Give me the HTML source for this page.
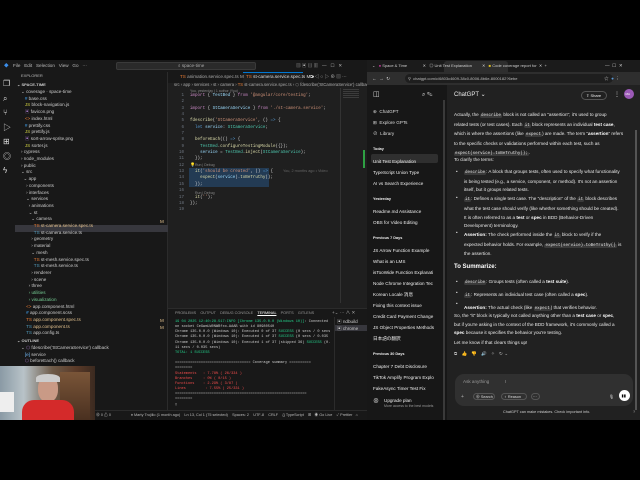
<!DOCTYPE html>
<html><head><meta charset="utf-8">
<style>
*{margin:0;padding:0;box-sizing:border-box}
body{width:640px;height:480px;background:#000;position:relative;overflow:hidden;font-family:"Liberation Sans","Noto Sans CJK JP",sans-serif;font-size:4.6px;color:#ccc}
.a{position:absolute;white-space:nowrap;line-height:6px}
.m{font-family:"Liberation Mono",monospace}
.bx{position:absolute}
.cm{background:#3a3a3a;border-radius:1.5px;padding:0 1px;font-family:"Liberation Mono",monospace;font-size:4.2px;color:#ddd}
b{color:#fff}
</style></head><body>
<!-- VS Code -->
<div class="bx" style="left:0;top:60px;width:367px;height:360px;background:#1f1f1f"></div>
<div class="bx" style="left:0;top:60px;width:367px;height:12px;background:#181818"></div>
<div class="bx" style="left:116px;top:62px;width:140px;height:8px;background:#2a2a2a;border:1px solid #3a3a3a;border-radius:2px"></div>
<div class="a" style="left:178px;top:63px;color:#aaa">⌕ space-time</div>
<div class="a" style="left:4px;top:63px;color:#3b8eea">◆</div>
<div class="a" style="left:13px;top:63px;color:#bbb">File &nbsp; Edit &nbsp; Selection &nbsp; View &nbsp; Go &nbsp; ···</div>
<div class="a" style="left:296px;top:63px;color:#bbb">▥ ▣ ▤ ▥ &nbsp; — &nbsp; ☐ &nbsp; ✕</div>
<div class="bx" style="left:0;top:72px;width:15px;height:338px;background:#181818"></div>
<div class="a" style="left:3px;top:77px;font-size:8px;color:#ddd;line-height:14.5px">❐<br>⌕<br>⑂<br>▷<br>⊞<br>◎<br>ϟ</div>
<div class="bx" style="left:15px;top:72px;width:153px;height:338px;background:#181818;border-right:1px solid #2b2b2b"></div>
<div class="a" style="left:21px;top:73px;color:#bbb;font-size:4px">EXPLORER</div>
<div class="a" style="left:17px;top:81.5px;color:#ccc;font-size:4px;font-weight:bold">⌄ SPACE-TIME</div>
<div class="bx" style="left:15px;top:225px;width:153px;height:6.5px;background:#37373d"></div>
<div class="a" style="left:21px;top:89px;line-height:6.7px;color:#ccc">
⌄ coverage · space-time<br>
&nbsp;&nbsp;&nbsp;<span style="color:#42a5f5">#</span> base.css<br>
&nbsp;&nbsp;&nbsp;<span style="color:#cbcb41">JS</span> block-navigation.js<br>
&nbsp;&nbsp;&nbsp;<span style="color:#a074c4">▣</span> favicon.png<br>
&nbsp;&nbsp;&nbsp;<span style="color:#e37933">&lt;&gt;</span> index.html<br>
&nbsp;&nbsp;&nbsp;<span style="color:#42a5f5">#</span> prettify.css<br>
&nbsp;&nbsp;&nbsp;<span style="color:#cbcb41">JS</span> prettify.js<br>
&nbsp;&nbsp;&nbsp;<span style="color:#a074c4">▣</span> sort-arrow-sprite.png<br>
&nbsp;&nbsp;&nbsp;<span style="color:#cbcb41">JS</span> sorter.js<br>
› cypress<br>› node_modules<br>› public<br>⌄ src<br>
&nbsp;&nbsp;⌄ app<br>&nbsp;&nbsp;&nbsp;&nbsp;› components<br>&nbsp;&nbsp;&nbsp;&nbsp;› interfaces<br>&nbsp;&nbsp;&nbsp;&nbsp;⌄ services<br>&nbsp;&nbsp;&nbsp;&nbsp;&nbsp;&nbsp;› animations<br>&nbsp;&nbsp;&nbsp;&nbsp;&nbsp;&nbsp;⌄ st<br>&nbsp;&nbsp;&nbsp;&nbsp;&nbsp;&nbsp;&nbsp;&nbsp;⌄ camera<br>
&nbsp;&nbsp;&nbsp;&nbsp;&nbsp;&nbsp;&nbsp;&nbsp;&nbsp;&nbsp;<span style="color:#e37933">TS</span> <span style="color:#e2c08d">st-camera.service.spec.ts</span><br>
&nbsp;&nbsp;&nbsp;&nbsp;&nbsp;&nbsp;&nbsp;&nbsp;&nbsp;&nbsp;<span style="color:#519aba">TS</span> st-camera.service.ts<br>
&nbsp;&nbsp;&nbsp;&nbsp;&nbsp;&nbsp;&nbsp;&nbsp;› geometry<br>&nbsp;&nbsp;&nbsp;&nbsp;&nbsp;&nbsp;&nbsp;&nbsp;› material<br>&nbsp;&nbsp;&nbsp;&nbsp;&nbsp;&nbsp;&nbsp;&nbsp;⌄ mesh<br>
&nbsp;&nbsp;&nbsp;&nbsp;&nbsp;&nbsp;&nbsp;&nbsp;&nbsp;&nbsp;<span style="color:#e37933">TS</span> st-mesh.service.spec.ts<br>
&nbsp;&nbsp;&nbsp;&nbsp;&nbsp;&nbsp;&nbsp;&nbsp;&nbsp;&nbsp;<span style="color:#519aba">TS</span> st-mesh.service.ts<br>
&nbsp;&nbsp;&nbsp;&nbsp;&nbsp;&nbsp;&nbsp;&nbsp;› renderer<br>&nbsp;&nbsp;&nbsp;&nbsp;&nbsp;&nbsp;&nbsp;&nbsp;› scene<br>&nbsp;&nbsp;&nbsp;&nbsp;&nbsp;&nbsp;› three<br>
&nbsp;&nbsp;&nbsp;&nbsp;&nbsp;&nbsp;<span style="color:#73c991">› utilities</span><br>&nbsp;&nbsp;&nbsp;&nbsp;&nbsp;&nbsp;<span style="color:#73c991">› visualization</span><br>
&nbsp;&nbsp;&nbsp;&nbsp;<span style="color:#e37933">&lt;&gt;</span> app.component.html<br>
&nbsp;&nbsp;&nbsp;&nbsp;<span style="color:#42a5f5">#</span> app.component.scss<br>
&nbsp;&nbsp;&nbsp;&nbsp;<span style="color:#e37933">TS</span> <span style="color:#e2c08d">app.component.spec.ts</span><br>
&nbsp;&nbsp;&nbsp;&nbsp;<span style="color:#519aba">TS</span> <span style="color:#e2c08d">app.component.ts</span><br>
&nbsp;&nbsp;&nbsp;&nbsp;<span style="color:#519aba">TS</span> app.config.ts
</div>
<div class="a" style="left:17px;top:338px;font-size:4px;font-weight:bold">⌄ OUTLINE</div>
<div class="a" style="left:21px;top:345px;line-height:6.7px">⌄ <span style="color:#b180d7">⬡</span> fdescribe('StCameraService') callback<br>&nbsp;&nbsp;&nbsp;<span style="color:#75beff">[e]</span> service<br>&nbsp;&nbsp;&nbsp;<span style="color:#b180d7">⬡</span> beforeEach() callback</div>
<div class="a" style="left:160px;top:219px;color:#e2c08d;line-height:6.7px">M<br>&nbsp;</div>
<div class="a" style="left:160px;top:318px;color:#e2c08d;line-height:6.7px">M<br>M</div>
<!-- tabs -->
<div class="bx" style="left:168px;top:72px;width:199px;height:11px;background:#181818"></div>
<div class="bx" style="left:243px;top:72px;width:60px;height:11px;background:#1f1f1f;border-top:1px solid #0078d4"></div>
<div class="a" style="left:180px;top:74px;color:#aaa"><span style="color:#e37933">TS</span> animation.service.spec.ts M</div>
<div class="a" style="left:246px;top:74px;color:#ddd"><span style="color:#e37933">TS</span> st-camera.service.spec.ts M ●</div>
<div class="a" style="left:310px;top:74px;color:#bbb">⧉ ◁ ○ ▷ ⊕ ▥ ···</div>
<div class="a" style="left:174px;top:82px;color:#aaa;font-size:4.2px">src › app › services › st › camera › <span style="color:#e37933">TS</span> st-camera.service.spec.ts › ⬡ fdescribe('StCameraService') callback</div>
<div class="a" style="left:190px;top:88px;color:#888;font-size:3.5px">You, yesterday | 1 author (You)</div>
<div class="bx" style="left:189px;top:168px;width:80px;height:19px;background:#264f78;opacity:.6"></div>
<div class="a m" style="left:176px;top:93px;line-height:6.35px;color:#6e7681;font-size:4.2px;text-align:right;width:8px">1<br>2<br>3<br>4<br>5<br>6<br>7<br>8<br>9<br>10<br>11<br>12<br>13<br>14<br>15<br>16<br>17<br>18<br>19</div>
<div class="a m" style="left:190px;top:93px;line-height:6.35px;font-size:4.2px;color:#d4d4d4">
<span style="color:#c586c0">import</span> { <span style="color:#9cdcfe">TestBed</span> } <span style="color:#c586c0">from</span> <span style="color:#ce9178">'@angular/core/testing'</span>;<br><br>
<span style="color:#c586c0">import</span> { <span style="color:#9cdcfe">StCameraService</span> } <span style="color:#c586c0">from</span> <span style="color:#ce9178">'./st-camera.service'</span>;<br><br>
<span style="color:#dcdcaa">fdescribe</span>(<span style="color:#ce9178">'StCameraService'</span>, () <span style="color:#569cd6">=&gt;</span> {<br>
&nbsp;&nbsp;<span style="color:#569cd6">let</span> <span style="color:#9cdcfe">service</span>: <span style="color:#4ec9b0">StCameraService</span>;<br><br>
&nbsp;&nbsp;<span style="color:#dcdcaa">beforeEach</span>(() <span style="color:#569cd6">=&gt;</span> {<br>
&nbsp;&nbsp;&nbsp;&nbsp;<span style="color:#4ec9b0">TestBed</span>.<span style="color:#dcdcaa">configureTestingModule</span>({});<br>
&nbsp;&nbsp;&nbsp;&nbsp;<span style="color:#9cdcfe">service</span> = <span style="color:#4ec9b0">TestBed</span>.<span style="color:#dcdcaa">inject</span>(<span style="color:#4ec9b0">StCameraService</span>);<br>
&nbsp;&nbsp;});<br><span style="color:#ffcc00">💡</span><br>
&nbsp;&nbsp;<span style="color:#dcdcaa">it</span>(<span style="color:#ce9178">'should be created'</span>, () <span style="color:#569cd6">=&gt;</span> {<br>
&nbsp;&nbsp;&nbsp;&nbsp;<span style="color:#dcdcaa">expect</span>(<span style="color:#9cdcfe">service</span>).<span style="color:#dcdcaa">toBeTruthy</span>();<br>
&nbsp;&nbsp;});<br><br>
&nbsp;&nbsp;<span style="color:#dcdcaa">it</span>(<span style="color:#ce9178">''</span>);<br>});<br></div>
<div class="a" style="left:195px;top:162px;color:#888;font-size:3.5px">Run | Debug</div>
<div class="a" style="left:195px;top:190px;color:#888;font-size:3.5px">Run | Debug</div>
<div class="a" style="left:283px;top:168px;color:#666;font-size:3.8px">You, 2 months ago • Video</div>
<div class="bx" style="left:340px;top:88px;width:1px;height:215px;background:#333"></div>
<div class="bx" style="left:343px;top:89px;width:16px;height:10px;opacity:.4;background:repeating-linear-gradient(#666 0 1px,transparent 1px 2px)"></div>
<div class="bx" style="left:363px;top:150px;width:1.5px;height:18px;background:#2ea043"></div>
<!-- panel -->
<div class="bx" style="left:168px;top:308px;width:199px;height:102px;background:#181818;border-top:1px solid #2b2b2b"></div>
<div class="a" style="left:175px;top:310px;color:#999;font-size:3.8px">PROBLEMS &nbsp;&nbsp; OUTPUT &nbsp;&nbsp; DEBUG CONSOLE &nbsp;&nbsp; <span style="color:#fff;text-decoration:underline">TERMINAL</span> &nbsp;&nbsp; PORTS &nbsp;&nbsp; GITLENS</div>
<div class="a" style="left:332px;top:310px;color:#aaa">+⌄ ··· ∧ ✕</div>
<div class="bx" style="left:334px;top:317px;width:33px;height:93px;border-left:1px solid #2b2b2b"></div>
<div class="bx" style="left:335px;top:325px;width:32px;height:6px;background:#37373d"></div>
<div class="a" style="left:337px;top:318px;line-height:7px">▣ ndbuild<br>▣ chrome</div>
<div class="a m" style="left:175px;top:320px;font-size:3.6px;line-height:5.15px;color:#ccc">
<span style="color:#23d18b">19 04 2025 12:40:28.517:INFO [Chrome 135.0.0.0 (Windows 10)]</span>: Connected<br>
on socket CeGwmLW0NWBfxo-AAAB with id 80980540<br>
Chrome 135.0.0.0 (Windows 10): Executed 0 of 37 <span style="color:#23d18b">SUCCESS</span> (0 secs / 0 secs<br>
Chrome 135.0.0.0 (Windows 10): Executed 1 of 37 <span style="color:#23d18b">SUCCESS</span> (0 secs / 0.035<br>
Chrome 135.0.0.0 (Windows 10): Executed 1 of 37 (skipped 36) <span style="color:#23d18b">SUCCESS</span> (0.<br>
11 secs / 0.035 secs)<br>
<span style="color:#23d18b">TOTAL: 1 SUCCESS</span><br><br>
=================================== Coverage summary ==========<br>
========<br>
<span style="color:#f14c4c">Statements &nbsp;&nbsp;: 7.78% ( 26/334 )</span><br>
<span style="color:#f14c4c">Branches &nbsp;&nbsp;&nbsp;&nbsp;: 0% ( 0/15 )</span><br>
<span style="color:#f14c4c">Functions &nbsp;&nbsp;&nbsp;: 2.29% ( 3/87 )</span><br>
<span style="color:#f14c4c">Lines &nbsp;&nbsp;&nbsp;&nbsp;&nbsp;&nbsp;&nbsp;&nbsp;: 7.55% ( 25/331 )</span><br>
=============================================================<br>
========<br>▯</div>
<!-- status bar -->
<div class="bx" style="left:0;top:410px;width:367px;height:10px;background:#181818;border-top:1px solid #2b2b2b"></div>
<div class="a" style="left:96px;top:411.5px;color:#bbb;font-size:3.8px">⊗ 0 ⚠ 0</div>
<div class="a" style="left:131px;top:411.5px;color:#bbb;font-size:3.8px">♦ Marty Trujillo (1 month ago) &nbsp;&nbsp; Ln 13, Col 1 (75 selected) &nbsp;&nbsp; Spaces: 2 &nbsp;&nbsp; UTF-8 &nbsp;&nbsp; CRLF &nbsp;&nbsp; {} TypeScript &nbsp;&nbsp; ⊞ &nbsp; ◉ Go Live &nbsp;&nbsp; ✓ Prettier &nbsp; ⌂</div>
<!-- webcam -->
<div class="bx" style="left:0;top:366px;width:95px;height:54px;background:linear-gradient(90deg,#8a9aa5 0%,#b8c3c8 25%,#6d5a48 55%,#5a3a28 80%,#3b2a20 100%)"></div>
<div class="bx" style="left:60px;top:372px;width:30px;height:48px;background:linear-gradient(#7a5538,#4a3020)"></div>
<div class="bx" style="left:38px;top:376px;width:20px;height:26px;border-radius:45%;background:#c99a86"></div>
<div class="bx" style="left:36px;top:374px;width:24px;height:8px;border-radius:50% 50% 0 0;background:#ccc"></div>
<div class="bx" style="left:22px;top:400px;width:52px;height:20px;border-radius:12px 12px 0 0;background:#d42a2a"></div>
<div class="bx" style="left:0;top:392px;width:14px;height:20px;background:#eee"></div>
<!-- Browser -->
<div class="bx" style="left:367px;top:60px;width:273px;height:360px;background:#212121"></div>
<div class="bx" style="left:367px;top:60px;width:273px;height:12px;background:#1b1b1b"></div>
<div class="bx" style="left:444px;top:61px;width:64px;height:11px;background:#2e2e2e;border-radius:3px 3px 0 0"></div>
<div class="a" style="left:372px;top:63px;color:#ccc;font-size:4px">⌄ &nbsp;&nbsp;<span style="color:#d63aa8">●</span> Space &amp; Time &nbsp;&nbsp;&nbsp;&nbsp;&nbsp;&nbsp;&nbsp;&nbsp;&nbsp;&nbsp;&nbsp;&nbsp;&nbsp;✕ &nbsp;&nbsp;◎ Unit Test Explanation &nbsp;&nbsp;&nbsp;&nbsp;&nbsp;&nbsp;&nbsp;&nbsp;✕ &nbsp;&nbsp;<span style="color:#e0c020">■</span> Code coverage report for &nbsp;✕ &nbsp;+</div>
<div class="a" style="left:605px;top:63px;color:#ccc">— &nbsp;☐ &nbsp;✕</div>
<div class="bx" style="left:367px;top:72px;width:273px;height:13px;background:#2e2e2e"></div>
<div class="bx" style="left:405px;top:74px;width:208px;height:9px;background:#1e1e1e;border-radius:5px"></div>
<div class="a" style="left:372px;top:75.5px;color:#ccc">← &nbsp;→ &nbsp;↻</div>
<div class="a" style="left:408px;top:75.5px;color:#bbb;font-size:4px">⚲ &nbsp;chatgpt.com/c/6803c4609-38c0-8006-8b6e-8000182?6ebe</div>
<div class="a" style="left:604px;top:75.5px;color:#ccc">☆ &nbsp;<span style="color:#5a9ad8">●</span> ⋮</div>
<!-- chat sidebar -->
<div class="bx" style="left:367px;top:85px;width:80px;height:335px;background:#171717"></div>
<div class="bx" style="left:443px;top:100px;width:2px;height:320px;background:#3a3a3a"></div>
<div class="a" style="left:373px;top:92px;color:#ddd;font-size:7px">◫</div>
<div class="a" style="left:422px;top:92px;color:#ddd;font-size:6px">⌕ ✎</div>
<div class="bx" style="left:371px;top:154px;width:67px;height:9px;background:#2f2f2f;border-radius:2px"></div>
<div class="a" style="left:373px;top:106px;color:#ddd;line-height:11px">⊛ &nbsp;ChatGPT<br>⊞ &nbsp;Explore GPTs<br>⊘ &nbsp;Library</div>
<div class="a" style="left:373px;top:145.5px;color:#eee;font-size:3.8px;font-weight:bold">Today</div>
<div class="a" style="left:373px;top:156px;color:#eee;line-height:11px">Unit Test Explanation<br>TypeScript Union Type<br>AI vs Search Experience</div>
<div class="a" style="left:373px;top:196px;color:#eee;font-size:3.8px;font-weight:bold">Yesterday</div>
<div class="a" style="left:373px;top:206px;color:#eee;line-height:11px">Readme.md Assistance<br>OBS for Video Editing</div>
<div class="a" style="left:373px;top:235px;color:#eee;font-size:3.8px;font-weight:bold">Previous 7 Days</div>
<div class="a" style="left:373px;top:244.5px;color:#eee;line-height:11px">JS Arrow Function Example<br>What is an LMS<br>isTooWide Function Explanati<br>Node Chrome Integration Tec<br>Korean Locale 消息<br>Fixing this context issue<br>Credit Card Payment Change<br>JS Object Properties Methods<br>日本語の翻訳</div>
<div class="a" style="left:373px;top:351px;color:#eee;font-size:3.8px;font-weight:bold">Previous 30 Days</div>
<div class="a" style="left:373px;top:361px;color:#eee;line-height:11px">Chapter 7 Debt Disclosure<br>TikTok Amplify Program Explo<br>FakeAsync Timer Test Fix</div>
<div class="a" style="left:373px;top:399px;color:#ddd;font-size:6px">⊗</div>
<div class="a" style="left:384px;top:398px;color:#eee;line-height:5px">Upgrade plan<br><span style="color:#999;font-size:3.5px">More access to the best models</span></div>
<!-- chat main -->
<div class="a" style="left:454px;top:92px;color:#eee;font-size:6px;line-height:7px">ChatGPT ⌄</div>
<div class="bx" style="left:581px;top:91px;width:26px;height:9px;border:1px solid #555;border-radius:5px"></div>
<div class="a" style="left:586px;top:92.5px;color:#eee;font-size:4px">⇪ Share</div>
<div class="a" style="left:614px;top:92px;color:#ddd;font-size:6px">⋮</div>
<div class="bx" style="left:624px;top:89px;width:10px;height:10px;border-radius:50%;background:#9b59b6"></div>
<div class="a" style="left:625.5px;top:91px;color:#fff;font-size:3px">MA</div>
<div class="a" style="left:454px;top:111px;color:#e8e8e8;line-height:8.7px">
Actually, the <span class="cm">describe</span> block is not called an "assertion"; it's used to group<br>
related tests (or test cases). Each <span class="cm">it</span> block represents an individual <b>test case</b>,<br>
which is where the assertions (like <span class="cm">expect</span>) are made. The term "<b>assertion</b>" refers<br>
to the specific checks or validations performed within each test, such as<br>
<span class="cm">expect(service).toBeTruthy();</span>.</div>
<div class="a" style="left:454px;top:157px;color:#e8e8e8">To clarify the terms:</div>
<div class="a" style="left:456px;top:168px;color:#e8e8e8;line-height:8.7px">•<br><br><br>•<br><br><br><br>•</div>
<div class="a" style="left:464px;top:168px;color:#e8e8e8;line-height:8.7px">
<span class="cm">describe</span>: A block that groups tests, often used to specify what functionality<br>
is being tested (e.g., a service, component, or method). It's not an assertion<br>
itself, but it groups related tests.<br>
<span class="cm">it</span>: Defines a single test case. The "description" of the <span class="cm">it</span> block describes<br>
what the test case should verify (like whether something should be created).<br>
It is often referred to as a <b>test</b> or <b>spec</b> in BDD (Behavior-Driven<br>
Development) terminology.<br>
<b>Assertion:</b> The check performed inside the <span class="cm">it</span> block to verify if the<br>
expected behavior holds. For example, <span class="cm">expect(service).toBeTruthy()</span> is<br>
the assertion.</div>
<div class="a" style="left:454px;top:264px;color:#fff;font-size:6px;font-weight:bold;line-height:7px">To Summarize:</div>
<div class="a" style="left:456px;top:276px;color:#e8e8e8;line-height:11px">•<br>•<br>•</div>
<div class="a" style="left:464px;top:276px;color:#e8e8e8;line-height:11px">
<span class="cm">describe</span>: Groups tests (often called a <b>test suite</b>).<br>
<span class="cm">it</span>: Represents an individual test case (often called a <b>spec</b>).<br>
<b>Assertion:</b> The actual check (like <span class="cm">expect</span>) that verifies behavior.</div>
<div class="a" style="left:454px;top:312px;color:#e8e8e8;line-height:8.5px">
So, the "it" block is typically not called anything other than a <b>test case</b> or <b>spec</b>,<br>
but if you're asking in the context of the BDD framework, it's commonly called a<br>
<b>spec</b> because it specifies the behavior you're testing.</div>
<div class="a" style="left:454px;top:340px;color:#e8e8e8">Let me know if that clears things up!</div>
<div class="a" style="left:454px;top:351px;color:#bbb;font-size:4.5px;letter-spacing:1.5px">⧉ 👍 👎 🔊 ✧ ↻⌄</div>
<div class="bx" style="left:635px;top:130px;width:1.5px;height:280px;background:#555"></div>
<div class="bx" style="left:455px;top:374px;width:178px;height:32px;background:#303030;border-radius:9px"></div>
<div class="a" style="left:463px;top:379px;color:#999">Ask anything &nbsp;&nbsp;&nbsp;&nbsp;&nbsp;&nbsp;&nbsp;&nbsp;&nbsp;&nbsp;&nbsp;I</div>
<div class="a" style="left:461px;top:394px;color:#aaa;font-size:5px">+</div>
<div class="bx" style="left:473px;top:393px;width:22px;height:7px;border:1px solid #555;border-radius:4px"></div>
<div class="a" style="left:476px;top:393.5px;color:#ddd;font-size:3.8px">⊕ Search</div>
<div class="bx" style="left:501px;top:393px;width:26px;height:7px;border:1px solid #555;border-radius:4px"></div>
<div class="a" style="left:504px;top:393.5px;color:#ddd;font-size:3.8px">♀ Reason</div>
<div class="bx" style="left:531px;top:393px;width:9px;height:7px;border:1px solid #555;border-radius:4px"></div>
<div class="a" style="left:533px;top:393.5px;color:#ddd;font-size:3.8px">···</div>
<div class="a" style="left:609px;top:393.5px;color:#ddd;font-size:4px">🎙</div>
<div class="bx" style="left:619px;top:390px;width:11px;height:11px;border-radius:50%;background:#fff"></div>
<div class="a" style="left:621.5px;top:392.5px;color:#000;font-size:4px">▮▮</div>
<div class="a" style="left:503px;top:408.5px;color:#ccc;font-size:3.8px">ChatGPT can make mistakes. Check important info.</div>
<div class="a" style="left:633px;top:408.5px;color:#aaa;font-size:3.8px">?</div>
</body></html>
